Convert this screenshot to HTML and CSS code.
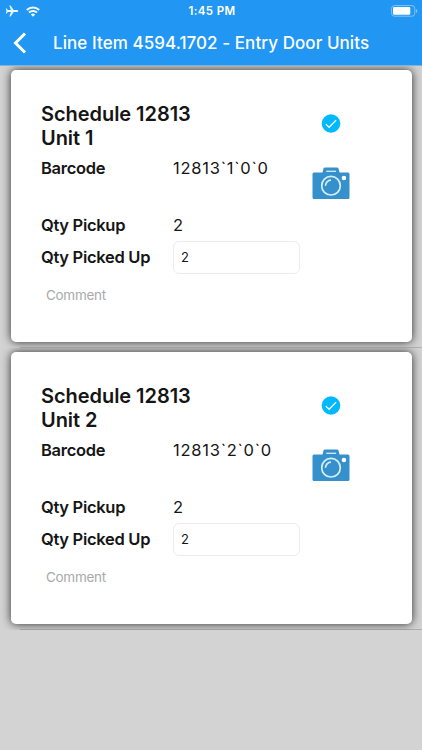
FILE: index.html
```html
<!DOCTYPE html>
<html lang="en">
<head>
    <meta charset="UTF-8">
    <meta name="viewport" content="width=device-width, initial-scale=1.0">
    <title>Line Item</title>
    <link rel="stylesheet" href="styles.css">
</head>
<body>
    <svg width="0" height="0" class="d-none">
        <symbol id="icon-check" viewBox="0 0 20 20">
            <circle cx="10" cy="9.500" r="9.300" fill="#03b9fd"/>
            <path d="M4.800 10.100l3.300 3.200 7-7.200" fill="none" stroke="#fff" stroke-width="1.300"/>
        </symbol>
        <symbol id="icon-camera" viewBox="0 0 38 33">
            <path d="M2 5.500h8.500l1-4q.3-1 1.500-1h12q1.200 0 1.500 1l1 4H36q1.500 0 1.500 1.500v23.500q0 1.500-1.500 1.500H2q-1.500 0-1.500-1.500V7q0-1.500 1.500-1.500z" fill="#3690cc"/>
            <path d="M14.300 4.300h9.800" stroke="#d5effb" stroke-width="1.300"/>
            <circle cx="19" cy="18.700" r="9.300" fill="none" stroke="#d5effb" stroke-width="1.700"/>
            <path d="M13.500 18.700a5.500 5.500 0 0 1 5.500-5.500" fill="none" stroke="#d5effb" stroke-width="1.700"/>
            <circle cx="31.900" cy="11" r="2.300" fill="#fff"/>
        </symbol>
    </svg>

    <div class="header">
        <div class="status-bar">
            <div class="status-left">
                <svg width="14" height="14" viewBox="0 0 14 14">
                    <path d="M13.300 7q0 .9-1.500.9H8.700L5.600 12.600H4.300L5.900 7.900H2.900L1.700 9.400H.8L1.500 7 .8 4.600h.9L2.900 6.100h3L4.300 1.400h1.300L8.700 6.100h3.100q1.500 0 1.500.9z" fill="#e5f7ff"/>
                </svg>
                <svg width="14" height="11" viewBox="0 0 14 11">
                    <path d="M.8 4a9 9 0 0 1 12.400 0M3 6.500a5.800 5.800 0 0 1 8 0" fill="none" stroke="#f0faff" stroke-width="2"/>
                    <path d="M7 10.700L4.800 8.500a3.200 3.200 0 0 1 4.400 0z" fill="#f0faff"/>
                </svg>
            </div>
            <div class="status-time">1:45 PM</div>
            <div class="status-right">
                <svg width="27" height="12" viewBox="0 0 27 12">
                    <rect x=".6" y=".6" width="23.200" height="10.600" rx="2.800" fill="none" stroke="#84c4fa" stroke-width="1"/>
                    <rect x="2" y="2" width="17.300" height="7.800" rx="1.300" fill="#fff"/>
                    <path d="M25 4q1.300.5 1.300 2T25 8z" fill="#84c4fa"/>
                </svg>
            </div>
        </div>
        <div class="nav-bar">
            <svg class="nav-back" width="14" height="22" viewBox="0 0 14 22">
                <path d="M12 1.500L2.500 11l9.500 9.500" fill="none" stroke="#fff" stroke-width="3"/>
            </svg>
            <h1 class="nav-title">Line Item 4594.1702 - Entry Door Units</h1>
        </div>
    </div>

    <ul class="unit-list">
        <li class="unit-cell">
            <div class="unit-card">
                <div class="unit-row unit-row-title">
                    <h2 class="unit-title">Schedule 12813<br>Unit 1</h2>
                    <svg class="unit-check"><use href="#icon-check"/></svg>
                </div>
                <div class="unit-row unit-row-barcode">
                    <div class="unit-label">Barcode</div>
                    <div class="unit-value unit-barcode">12813`1`0`0</div>
                    <svg class="unit-camera"><use href="#icon-camera"/></svg>
                </div>
                <div class="unit-row unit-row-qty">
                    <div class="unit-label">Qty Pickup</div>
                    <div class="unit-value">2</div>
                </div>
                <div class="unit-row unit-row-input">
                    <div class="unit-label">Qty Picked Up</div>
                    <input type="text" class="unit-input" value="2">
                </div>
                <input type="text" class="unit-comment" placeholder="Comment">
            </div>
        </li>
        <li class="unit-cell">
            <div class="unit-card">
                <div class="unit-row unit-row-title">
                    <h2 class="unit-title">Schedule 12813<br>Unit 2</h2>
                    <svg class="unit-check"><use href="#icon-check"/></svg>
                </div>
                <div class="unit-row unit-row-barcode">
                    <div class="unit-label">Barcode</div>
                    <div class="unit-value unit-barcode">12813`2`0`0</div>
                    <svg class="unit-camera"><use href="#icon-camera"/></svg>
                </div>
                <div class="unit-row unit-row-qty">
                    <div class="unit-label">Qty Pickup</div>
                    <div class="unit-value">2</div>
                </div>
                <div class="unit-row unit-row-input">
                    <div class="unit-label">Qty Picked Up</div>
                    <input type="text" class="unit-input" value="2">
                </div>
                <input type="text" class="unit-comment" placeholder="Comment">
            </div>
        </li>
    </ul>
</body>
</html>
```

FILE: styles.css
```css
* {
    padding: 0;
    margin: 0;
    box-sizing: border-box;
}
body {
    background: #d3d3d3;
    color: #151515;
    font-family: Inter, "Liberation Sans", sans-serif;
}
ul {
    list-style: none;
}
.d-none {
    display: none;
}
.header {
    height: 66px;
    background: #2196f3;
    border-bottom: 1px solid #7fb2dc;
    color: #fff;
}
.status-bar {
    display: grid;
    grid-template-columns: 1fr auto 1fr;
    align-items: center;
    height: 22px;
    padding: 0 5px;
}
.status-left {
    display: flex;
    align-items: center;
    gap: 7px;
}
.status-time {
    padding-left: 2px;
    font-size: 11.5px;
    font-weight: 600;
    letter-spacing: 0.4px;
}
.status-right {
    display: flex;
    justify-content: flex-end;
    margin-right: -1px;
}
.nav-bar {
    display: flex;
    align-items: center;
    height: 42px;
    padding-left: 13px;
}
.nav-title {
    margin-left: 26px;
    font-size: 17px;
    font-weight: 550;
    letter-spacing: 0.07px;
    white-space: nowrap;
}
.unit-cell {
    height: 282px;
    padding: 4px 10.5px 6px;
    overflow: hidden;
    background: linear-gradient(#b0b0b0, #b0b0b0) 20px 100% / 100% 1px no-repeat;
}
.unit-card {
    height: 272px;
    padding: 32px 30.5px 0;
    background: #fff;
    border-radius: 5px;
    box-shadow: 0 0 10px rgba(0, 0, 0, 0.8);
}
.unit-row {
    display: flex;
}
.unit-row-title {
    height: 52px;
}
.unit-title {
    width: 280px;
    font-size: 20px;
    font-weight: 600;
    line-height: 24px;
    letter-spacing: -0.05px;
}
.unit-check {
    width: 20px;
    height: 20px;
    margin-top: 12px;
}
.unit-row-barcode {
    height: 57px;
}
.unit-label {
    width: 132px;
    font-size: 16.5px;
    font-weight: 600;
    line-height: 28px;
    letter-spacing: -0.3px;
}
.unit-value {
    width: 139px;
    font-size: 16.5px;
    line-height: 28px;
}
.unit-barcode {
    letter-spacing: 0.75px;
}
.unit-camera {
    width: 38px;
    height: 33px;
    margin-top: 13px;
}
.unit-row-qty {
    height: 29px;
}
.unit-row-input {
    align-items: center;
    height: 34px;
}
.unit-input {
    width: 127px;
    height: 33px;
    padding: 0 7px;
    border: 1px solid #ececec;
    border-radius: 6px;
    color: #151515;
    font-family: inherit;
    font-size: 13px;
}
.unit-comment {
    width: 160px;
    height: 30px;
    margin-top: 6px;
    padding: 0 5px;
    border: none;
    font-family: inherit;
    font-size: 13.5px;
    letter-spacing: -0.3px;
}
.unit-comment::placeholder {
    color: #a9a9a9;
}
```
